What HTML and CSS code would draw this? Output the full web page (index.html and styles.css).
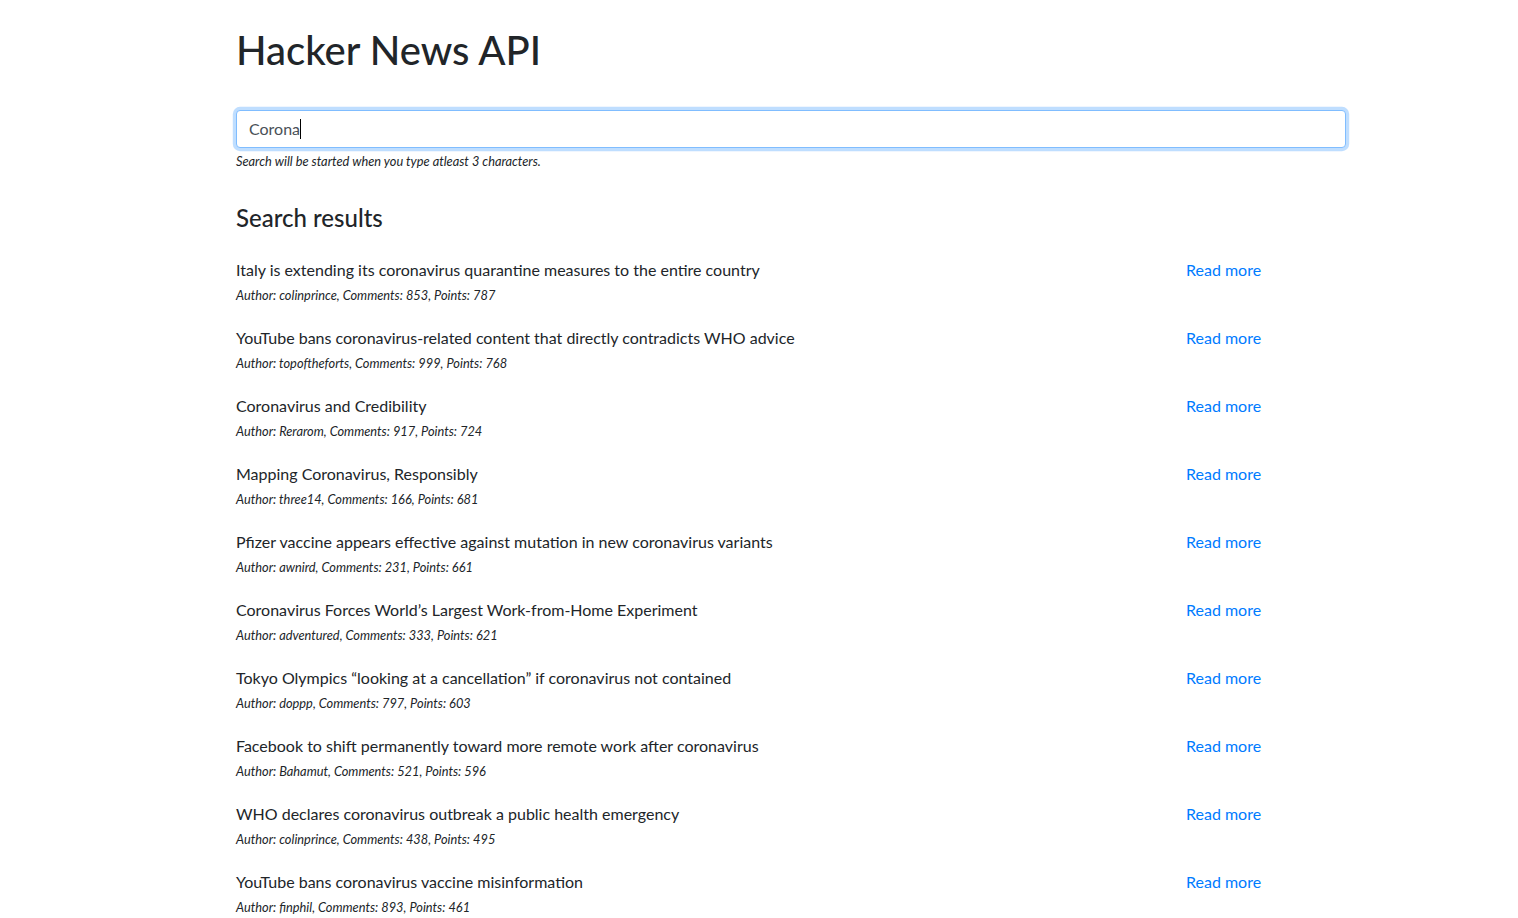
FILE: index.html
```html
<!DOCTYPE html>
<html lang="en">
<head>
<meta charset="utf-8">
<title>Hacker News API</title>
<link rel="stylesheet" href="styles.css">
</head>
<body>
<div class="container">
  <h1 class="title">Hacker News API</h1>
  <div class="form-group">
    <div class="form-control focused" role="textbox" aria-label="Search">Corona<span class="caret"></span></div>
    <small class="form-text">Search will be started when you type atleast 3 characters.</small>
  </div>
  <h4 class="results-title">Search results</h4>
  <ul class="results">
    <li class="row"><div class="col-main"><div class="item-title">Italy is extending its coronavirus quarantine measures to the entire country</div><div class="meta">Author: colinprince, Comments: 853, Points: 787</div></div><div class="col-side"><a href="#" class="link">Read more</a></div></li>
    <li class="row"><div class="col-main"><div class="item-title">YouTube bans coronavirus-related content that directly contradicts WHO advice</div><div class="meta">Author: topoftheforts, Comments: 999, Points: 768</div></div><div class="col-side"><a href="#" class="link">Read more</a></div></li>
    <li class="row"><div class="col-main"><div class="item-title">Coronavirus and Credibility</div><div class="meta">Author: Rerarom, Comments: 917, Points: 724</div></div><div class="col-side"><a href="#" class="link">Read more</a></div></li>
    <li class="row"><div class="col-main"><div class="item-title">Mapping Coronavirus, Responsibly</div><div class="meta">Author: three14, Comments: 166, Points: 681</div></div><div class="col-side"><a href="#" class="link">Read more</a></div></li>
    <li class="row"><div class="col-main"><div class="item-title">Pfizer vaccine appears effective against mutation in new coronavirus variants</div><div class="meta">Author: awnird, Comments: 231, Points: 661</div></div><div class="col-side"><a href="#" class="link">Read more</a></div></li>
    <li class="row"><div class="col-main"><div class="item-title">Coronavirus Forces World’s Largest Work-from-Home Experiment</div><div class="meta">Author: adventured, Comments: 333, Points: 621</div></div><div class="col-side"><a href="#" class="link">Read more</a></div></li>
    <li class="row"><div class="col-main"><div class="item-title">Tokyo Olympics “looking at a cancellation” if coronavirus not contained</div><div class="meta">Author: doppp, Comments: 797, Points: 603</div></div><div class="col-side"><a href="#" class="link">Read more</a></div></li>
    <li class="row"><div class="col-main"><div class="item-title">Facebook to shift permanently toward more remote work after coronavirus</div><div class="meta">Author: Bahamut, Comments: 521, Points: 596</div></div><div class="col-side"><a href="#" class="link">Read more</a></div></li>
    <li class="row"><div class="col-main"><div class="item-title">WHO declares coronavirus outbreak a public health emergency</div><div class="meta">Author: colinprince, Comments: 438, Points: 495</div></div><div class="col-side"><a href="#" class="link">Read more</a></div></li>
    <li class="row"><div class="col-main"><div class="item-title">YouTube bans coronavirus vaccine misinformation</div><div class="meta">Author: finphil, Comments: 893, Points: 461</div></div><div class="col-side"><a href="#" class="link">Read more</a></div></li>
  </ul>
</div>
</body>
</html>
```
FILE: styles.css
```css
* { box-sizing: border-box; }
html, body { margin: 0; padding: 0; background: #fff; }
body {
  font-family: "Segoe UI", Lato, "Liberation Sans", sans-serif;
  font-size: 16px;
  line-height: 1.5;
  color: #212529;
  overflow: hidden;
}
.container {
  width: 1110px;
  margin-left: 236px;
  padding-top: 26px;
}
.title {
  margin: 0 0 36px;
  font-size: 40px;
  font-weight: 500;
  line-height: 1.2;
}
.form-group { margin: 0; }
.form-control {
  display: block;
  height: 38px;
  padding: 6px 12px;
  font-size: 16px;
  line-height: 24px;
  color: #495057;
  background: #fff;
  border: 1px solid #ced4da;
  border-radius: 4px;
}
.form-control.focused {
  border-color: #80bdff;
  box-shadow: 0 0 0 3.2px rgba(0, 123, 255, 0.25);
}
.caret {
  display: inline-block;
  width: 1px;
  height: 20px;
  background: #000;
  vertical-align: -4px;
}
.form-text {
  display: block;
  margin-top: 4px;
  font-size: 12.8px;
  font-style: italic;
  line-height: 19.2px;
}
.results-title {
  margin: 33px 0 0;
  font-size: 24px;
  font-weight: 500;
  line-height: 1.2;
}
.results {
  list-style: none;
  margin: 25px 0 0;
  padding: 0;
}
.row {
  display: flex;
  margin-bottom: 21px;
}
.col-main { width: 950px; }
.col-side { flex: 1; }
.item-title { line-height: 24px; margin-bottom: 4px; }
.meta {
  font-size: 12.8px;
  font-style: italic;
  line-height: 19px;
}
.link { color: #007bff; text-decoration: none; line-height: 24px; }
```
